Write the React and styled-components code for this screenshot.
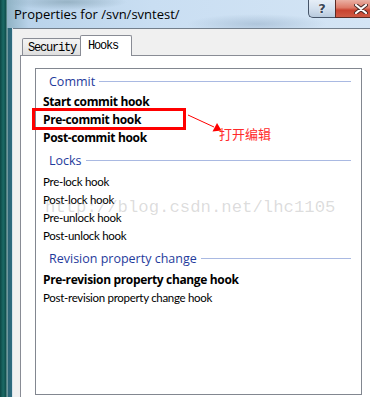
import React from "react";
import styled, { createGlobalStyle } from "styled-components";

const Global = createGlobalStyle`
  html, body { margin: 0; padding: 0; background: #ffffff; }
  #root { width: 370px; height: 397px; }
`;

const Screen = styled.div`
  position: relative;
  width: 370px;
  height: 397px;
  overflow: hidden;
  display: flex;
  font-family: "Open Sans", "Noto Sans", sans-serif;
`;

const DesktopStrip = styled.div`
  width: 7px;
  flex: none;
  background: linear-gradient(90deg, #0c4644 0%, #1b6a65 45%, #0f4e4c 85%, #8fb0b0 100%);
`;

const Window = styled.div`
  flex: 1;
  min-width: 0;
  display: flex;
  flex-direction: column;
`;

const TitleBar = styled.div`
  height: 28px;
  flex: none;
  display: flex;
  align-items: flex-start;
  background:
    radial-gradient(ellipse 60px 8px at 60px 2px, rgba(120,150,165,0.55), rgba(120,150,165,0) 100%),
    radial-gradient(ellipse 70px 10px at 250px 24px, rgba(150,175,200,0.55), rgba(150,175,200,0) 100%),
    linear-gradient(90deg, #8fb2c4 0%, #b9d3ea 6%, #c9def2 40%, #d4e5f5 100%);
`;

const Title = styled.div`
  flex: 1;
  height: 28px;
  line-height: 28px;
  padding-left: 7px;
  font-size: 13px;
  color: #000;
  white-space: nowrap;
`;

const HelpButton = styled.div`
  width: 27px;
  height: 18px;
  box-sizing: border-box;
  flex: none;
  border: 1px solid #465569;
  border-top: none;
  border-right: none;
  border-radius: 0 0 0 5px;
  background: linear-gradient(180deg, #e6eef7 0%, #d3e0ee 50%, #b8cadd 100%);
  display: flex;
  align-items: center;
  justify-content: center;
  font-family: "DejaVu Sans", sans-serif;
  font-weight: bold;
  font-size: 13px;
  color: #3a4656;
  text-shadow: 0 0 2px #fff, 0 0 1px #fff;
`;

const CloseButton = styled.div`
  width: 35px;
  height: 18px;
  box-sizing: border-box;
  flex: none;
  border-bottom: 1px solid #5a2a24;
  border-left: 1px solid #5a2a24;
  background: linear-gradient(180deg, #eab0a4 0%, #dd7a68 45%, #c8422f 60%, #cf5a44 100%);
  display: flex;
  align-items: center;
  padding-left: 18px;
`;

const Body = styled.div`
  flex: 1;
  display: flex;
  min-height: 0;
`;

const GlassBorder = styled.div`
  width: 6px;
  flex: none;
  box-sizing: border-box;
  border-left: 1px solid #6e99a0;
  border-right: 1px solid #d7e2e8;
  background: linear-gradient(90deg, #2b6676, #2e6b80);
`;

const Content = styled.div`
  flex: 1;
  min-width: 0;
  display: flex;
  flex-direction: column;
  background: #f0f0f0;
  border-top: 1px solid #737f8c;
  padding: 6px 0 0 7px;
`;

const TabRow = styled.div`
  display: flex;
  align-items: flex-end;
  padding-left: 2px;
  height: 20px;
  flex: none;
`;

const Tab = styled.div`
  position: relative;
  box-sizing: border-box;
  width: ${(p) => (p.$active ? 52 : 59)}px;
  height: ${(p) => (p.$active ? 21 : 17)}px;
  margin-bottom: ${(p) => (p.$active ? -1 : 0)}px;
  margin-left: ${(p) => (p.$active ? -1 : 0)}px;
  z-index: ${(p) => (p.$active ? 1 : 0)};
  border: 1px solid #898c95;
  border-bottom: none;
  border-radius: 2px 2px 0 0;
  background: ${(p) => (p.$active ? "#ffffff" : "linear-gradient(180deg, #f3f3f3 0%, #ebebeb 50%, #dedede 100%)")};
  font-family: "Liberation Mono", monospace;
  font-size: 12px;
  letter-spacing: -1.2px;
  color: #000;
  display: flex;
  align-items: ${(p) => (p.$active ? "flex-start" : "center")};
  padding-top: ${(p) => (p.$active ? 3 : 1)}px;
  padding-left: ${(p) => (p.$active ? 7 : 5)}px;
  white-space: nowrap;
`;

const Panel = styled.div`
  flex: 1;
  background: #ffffff;
  border: 1px solid #898c95;
  margin-right: -20px;
  margin-bottom: -20px;
  padding: 12px 0 0 14px;
`;

const List = styled.div`
  width: 327px;
  height: 327px;
  box-sizing: border-box;
  border: 1px solid #828790;
  background: #fff;
  padding: 0 10px 0 7px;
`;

const GroupHeader = styled.div`
  height: 26px;
  box-sizing: border-box;
  padding: 1px 0 0 6px;
  display: flex;
  align-items: center;
  gap: 4px;
  font-size: 12.5px;
  color: #1f3b9c;
  white-space: nowrap;
  &:first-child {
    height: 24px;
    padding-top: 0;
  }
`;

const HeaderLine = styled.div`
  flex: 1;
  height: 1px;
  background: #a9b9e2;
`;

const Item = styled.div`
  height: 18px;
  line-height: 18px;
  font-family: ${(p) => (p.$bold ? '"Open Sans", sans-serif' : 'Lato, "Open Sans", sans-serif')};
  font-size: ${(p) => (p.$bold ? "12px" : "11.5px")};
  letter-spacing: ${(p) => (p.$bold ? "-0.35px" : "-0.3px")};
  font-weight: ${(p) => (p.$bold ? 700 : 400)};
  color: #000;
  white-space: nowrap;
`;

const Highlight = styled.div`
  position: absolute;
  left: 32px;
  top: 108px;
  width: 154px;
  height: 22px;
  box-sizing: border-box;
  border: 3px solid #ff0000;
  pointer-events: none;
`;

const ArrowSvg = styled.svg`
  position: absolute;
  left: 180px;
  top: 105px;
  pointer-events: none;
`;

const Note = styled.div`
  position: absolute;
  left: 219px;
  top: 127px;
  font-family: "Noto Sans CJK SC", sans-serif;
  font-size: 13px;
  line-height: 13px;
  color: #ff2a2a;
  white-space: nowrap;
`;

const Watermark = styled.div`
  position: absolute;
  left: 45px;
  top: 199px;
  font-family: "Liberation Mono", monospace;
  font-size: 17.3px;
  line-height: 17px;
  color: rgba(120, 120, 120, 0.26);
  white-space: nowrap;
  pointer-events: none;
`;

const groups = [
  {
    title: "Commit",
    items: [
      { label: "Start commit hook", bold: true },
      { label: "Pre-commit hook", bold: true },
      { label: "Post-commit hook", bold: true },
    ],
  },
  {
    title: "Locks",
    items: [
      { label: "Pre-lock hook" },
      { label: "Post-lock hook" },
      { label: "Pre-unlock hook" },
      { label: "Post-unlock hook" },
    ],
  },
  {
    title: "Revision property change",
    items: [
      { label: "Pre-revision property change hook", bold: true },
      { label: "Post-revision property change hook" },
    ],
  },
];

export default function App() {
  return (
    <>
      <Global />
      <Screen>
        <DesktopStrip />
        <Window>
          <TitleBar>
            <Title>Properties for /svn/svntest/</Title>
            <HelpButton>?</HelpButton>
            <CloseButton>
              <svg width="14" height="10" viewBox="0 0 14 10">
                <path d="M2 1 L12 9 M12 1 L2 9" stroke="#4a2a26" strokeWidth="4" strokeLinecap="round" />
                <path d="M2 1 L12 9 M12 1 L2 9" stroke="#ffffff" strokeWidth="2.2" strokeLinecap="round" />
              </svg>
            </CloseButton>
          </TitleBar>
          <Body>
            <GlassBorder />
            <Content>
              <TabRow>
                <Tab>Security</Tab>
                <Tab $active>Hooks</Tab>
              </TabRow>
              <Panel>
                <List>
                  {groups.map((g) => (
                    <React.Fragment key={g.title}>
                      <GroupHeader>
                        <span>{g.title}</span>
                        <HeaderLine />
                      </GroupHeader>
                      {g.items.map((it) => (
                        <Item key={it.label} $bold={it.bold}>
                          {it.label}
                        </Item>
                      ))}
                    </React.Fragment>
                  ))}
                </List>
              </Panel>
            </Content>
          </Body>
        </Window>
        <Watermark>http://blog.csdn.net/lhc1105</Watermark>
        <Highlight />
        <ArrowSvg width="50" height="32" viewBox="180 105 50 32">
          <path d="M188 115 L214 127" stroke="#ff0000" strokeWidth="1" fill="none" />
          <polygon points="217,123 212.5,131.5 221.5,130.5" fill="#ff0000" />
        </ArrowSvg>
        <Note>打开编辑</Note>
      </Screen>
    </>
  );
}
